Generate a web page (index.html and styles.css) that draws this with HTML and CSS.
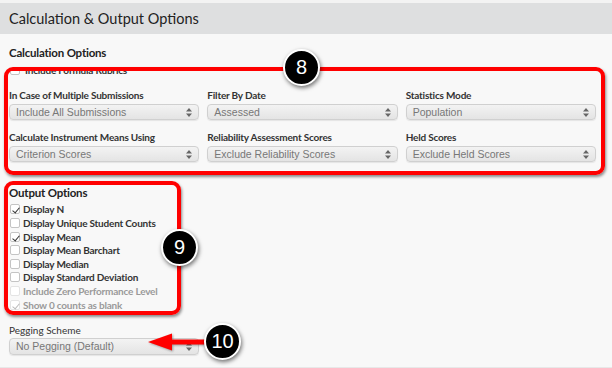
FILE: index.html
```html
<!doctype html>
<html lang="en">
  <head>
    <meta charset="UTF-8">
    <title>Calculation &amp; Output Options</title>
    <link rel="stylesheet" href="styles.css">
  </head>
  <body>
    <div class="header">
      <h1>Calculation &amp; Output Options</h1>
    </div>

    <div class="page">
      <h2 class="section-title">Calculation Options</h2>

      <div class="note calc-note">
        <div class="red-box calc-box">
          <div class="check-row rubrics"><span class="box"></span>Include Formula Rubrics</div>
          <div class="calc-grid">
            <div class="field">
              <div class="label">In Case of Multiple Submissions</div>
              <div class="select">Include All Submissions<svg class="arrows" width="6" height="9" viewBox="0 0 6 9"><path d="M3 0L6 3.5H0Z M3 9L0 5.5H6Z"/></svg></div>
            </div>
            <div class="field">
              <div class="label">Filter By Date</div>
              <div class="select">Assessed<svg class="arrows" width="6" height="9" viewBox="0 0 6 9"><path d="M3 0L6 3.5H0Z M3 9L0 5.5H6Z"/></svg></div>
            </div>
            <div class="field">
              <div class="label">Statistics Mode</div>
              <div class="select">Population<svg class="arrows" width="6" height="9" viewBox="0 0 6 9"><path d="M3 0L6 3.5H0Z M3 9L0 5.5H6Z"/></svg></div>
            </div>
            <div class="field">
              <div class="label">Calculate Instrument Means Using</div>
              <div class="select">Criterion Scores<svg class="arrows" width="6" height="9" viewBox="0 0 6 9"><path d="M3 0L6 3.5H0Z M3 9L0 5.5H6Z"/></svg></div>
            </div>
            <div class="field">
              <div class="label">Reliability Assessment Scores</div>
              <div class="select">Exclude Reliability Scores<svg class="arrows" width="6" height="9" viewBox="0 0 6 9"><path d="M3 0L6 3.5H0Z M3 9L0 5.5H6Z"/></svg></div>
            </div>
            <div class="field">
              <div class="label">Held Scores</div>
              <div class="select">Exclude Held Scores<svg class="arrows" width="6" height="9" viewBox="0 0 6 9"><path d="M3 0L6 3.5H0Z M3 9L0 5.5H6Z"/></svg></div>
            </div>
          </div>
        </div>
        <span class="badge badge-8">8</span>
      </div>

      <div class="note output-note">
        <div class="red-box output-box">
          <h3 class="output-title">Output Options</h3>
          <div class="check-list">
            <div class="check-row"><span class="box checked"></span>Display N</div>
            <div class="check-row"><span class="box"></span>Display Unique Student Counts</div>
            <div class="check-row"><span class="box checked"></span>Display Mean</div>
            <div class="check-row"><span class="box"></span>Display Mean Barchart</div>
            <div class="check-row"><span class="box"></span>Display Median</div>
            <div class="check-row"><span class="box"></span>Display Standard Deviation</div>
            <div class="check-row disabled"><span class="box"></span>Include Zero Performance Level</div>
            <div class="check-row disabled"><span class="box checked"></span>Show 0 counts as blank</div>
          </div>
        </div>
        <span class="badge badge-9">9</span>
      </div>

      <div class="note pegging">
        <div class="label plain">Pegging Scheme</div>
        <div class="select peg-select">No Pegging (Default)<svg class="arrows" width="6" height="9" viewBox="0 0 6 9"><path d="M3 0L6 3.5H0Z M3 9L0 5.5H6Z"/></svg></div>
        <svg class="red-arrow" width="62" height="18" viewBox="0 0 62 18">
          <rect x="20" y="6.5" width="42" height="5" fill="#f00"/>
          <polygon points="0,9 24,0.5 24,17.5" fill="#f00"/>
        </svg>
        <span class="badge badge-10">10</span>
      </div>

      <div class="footer-line"></div>
    </div>
  </body>
</html>
```

FILE: styles.css
```css
* {
  box-sizing: border-box;
}

body {
  margin: 0;
  background: #f8f8f8;
  font-family: Lato, "Liberation Sans", sans-serif;
  color: #333;
  overflow: hidden;
}

.header {
  height: 34px;
  border-top: 3px solid #f3f3f3;
  background: #dedfe0;
  padding-left: 9px;
}

.header h1 {
  margin: 0;
  font-size: 14.5px;
  font-weight: 400;
  line-height: 31px;
  color: #222;
}

.page {
  padding: 12px 7px 0 9px;
}

.section-title {
  margin: 0;
  font-size: 11.5px;
  font-weight: 700;
  letter-spacing: -0.2px;
  line-height: 14px;
  color: #222;
}

/* red annotation boxes */
.note {
  position: relative;
}

.red-box {
  border: 4px solid #f00;
  border-radius: 9px;
  box-shadow: 1px 2px 3px rgba(0, 0, 0, 0.45);
  overflow: hidden;
}

.calc-note {
  margin: 7px 0 0 -5px;
}

.calc-box {
  padding: 0 5px 9px 1px;
}

.rubrics {
  margin-top: -8px;
  line-height: 12px;
  height: 12px;
}

.calc-grid {
  display: grid;
  grid-template-columns: repeat(3, 1fr);
  column-gap: 8px;
  row-gap: 11px;
  margin-top: 12px;
}

.label {
  font-size: 10px;
  font-weight: 700;
  letter-spacing: -0.2px;
  line-height: 12px;
  margin-bottom: 3px;
  color: #333;
  white-space: nowrap;
}

.label.plain {
  font-weight: 400;
  letter-spacing: 0;
  margin-bottom: 2px;
}

.select {
  position: relative;
  height: 16px;
  border: 1px solid #d0d0d0;
  border-radius: 4px;
  background: linear-gradient(#f3f3f3, #e4e4e4);
  box-shadow: 0 1px 1px rgba(0, 0, 0, 0.08);
  font-family: "Liberation Sans", Arial, sans-serif;
  font-size: 10.5px;
  line-height: 14px;
  color: #777;
  padding-left: 6px;
  white-space: nowrap;
}

.arrows {
  position: absolute;
  right: 6px;
  top: 3px;
  fill: #666;
}

.output-note {
  margin: 6px 0 0 -5px;
  width: 177px;
}

.output-box {
  padding: 1px 0 0 1px;
}

.output-title {
  margin: 0;
  font-size: 11.5px;
  font-weight: 700;
  letter-spacing: -0.2px;
  line-height: 14px;
  color: #222;
}

.check-list {
  margin-top: 3px;
}

.check-row {
  display: flex;
  align-items: center;
  height: 13.6px;
  font-size: 10px;
  font-weight: 700;
  letter-spacing: -0.2px;
  color: #333;
  white-space: nowrap;
}

.check-row.disabled {
  color: #9a9a9a;
}

.box {
  position: relative;
  flex: none;
  width: 10px;
  height: 10px;
  margin: 0 3px 0 1px;
  border: 1px solid #c4c4c4;
  border-radius: 2px;
  background: #fff;
}

.rubrics .box {
  margin-right: 5px;
}

.disabled .box {
  border-color: #e4e4e4;
}

.box.checked::after {
  content: "";
  position: absolute;
  left: 3px;
  top: 1px;
  width: 3px;
  height: 6px;
  border: solid #333;
  border-width: 0 1px 1px 0;
  transform: rotate(40deg);
}

.disabled .box.checked::after {
  border-color: #bbb;
}

.pegging {
  margin-top: 9px;
}

.peg-select {
  width: 190px;
  height: 17px;
  line-height: 15px;
}

.red-arrow {
  position: absolute;
  left: 139px;
  top: 9px;
  filter: drop-shadow(1px 1px 1px rgba(0, 0, 0, 0.35));
}

.footer-line {
  margin: 12px -7px 0 -9px;
  height: 2px;
  background: #e8e8e8;
}

/* numbered badges */
.badge {
  position: absolute;
  width: 37px;
  height: 37px;
  border: 2.5px solid #fff;
  border-radius: 50%;
  background: #000;
  box-shadow: 1px 2px 4px rgba(0, 0, 0, 0.55);
  color: #fff;
  font-family: "Liberation Sans", Arial, sans-serif;
  font-size: 20px;
  line-height: 32px;
  text-align: center;
}

.badge-8 {
  left: 279px;
  top: -18px;
}

.badge-9 {
  left: 157px;
  top: 48px;
}

.badge-10 {
  left: 195px;
  top: -1px;
}
```
